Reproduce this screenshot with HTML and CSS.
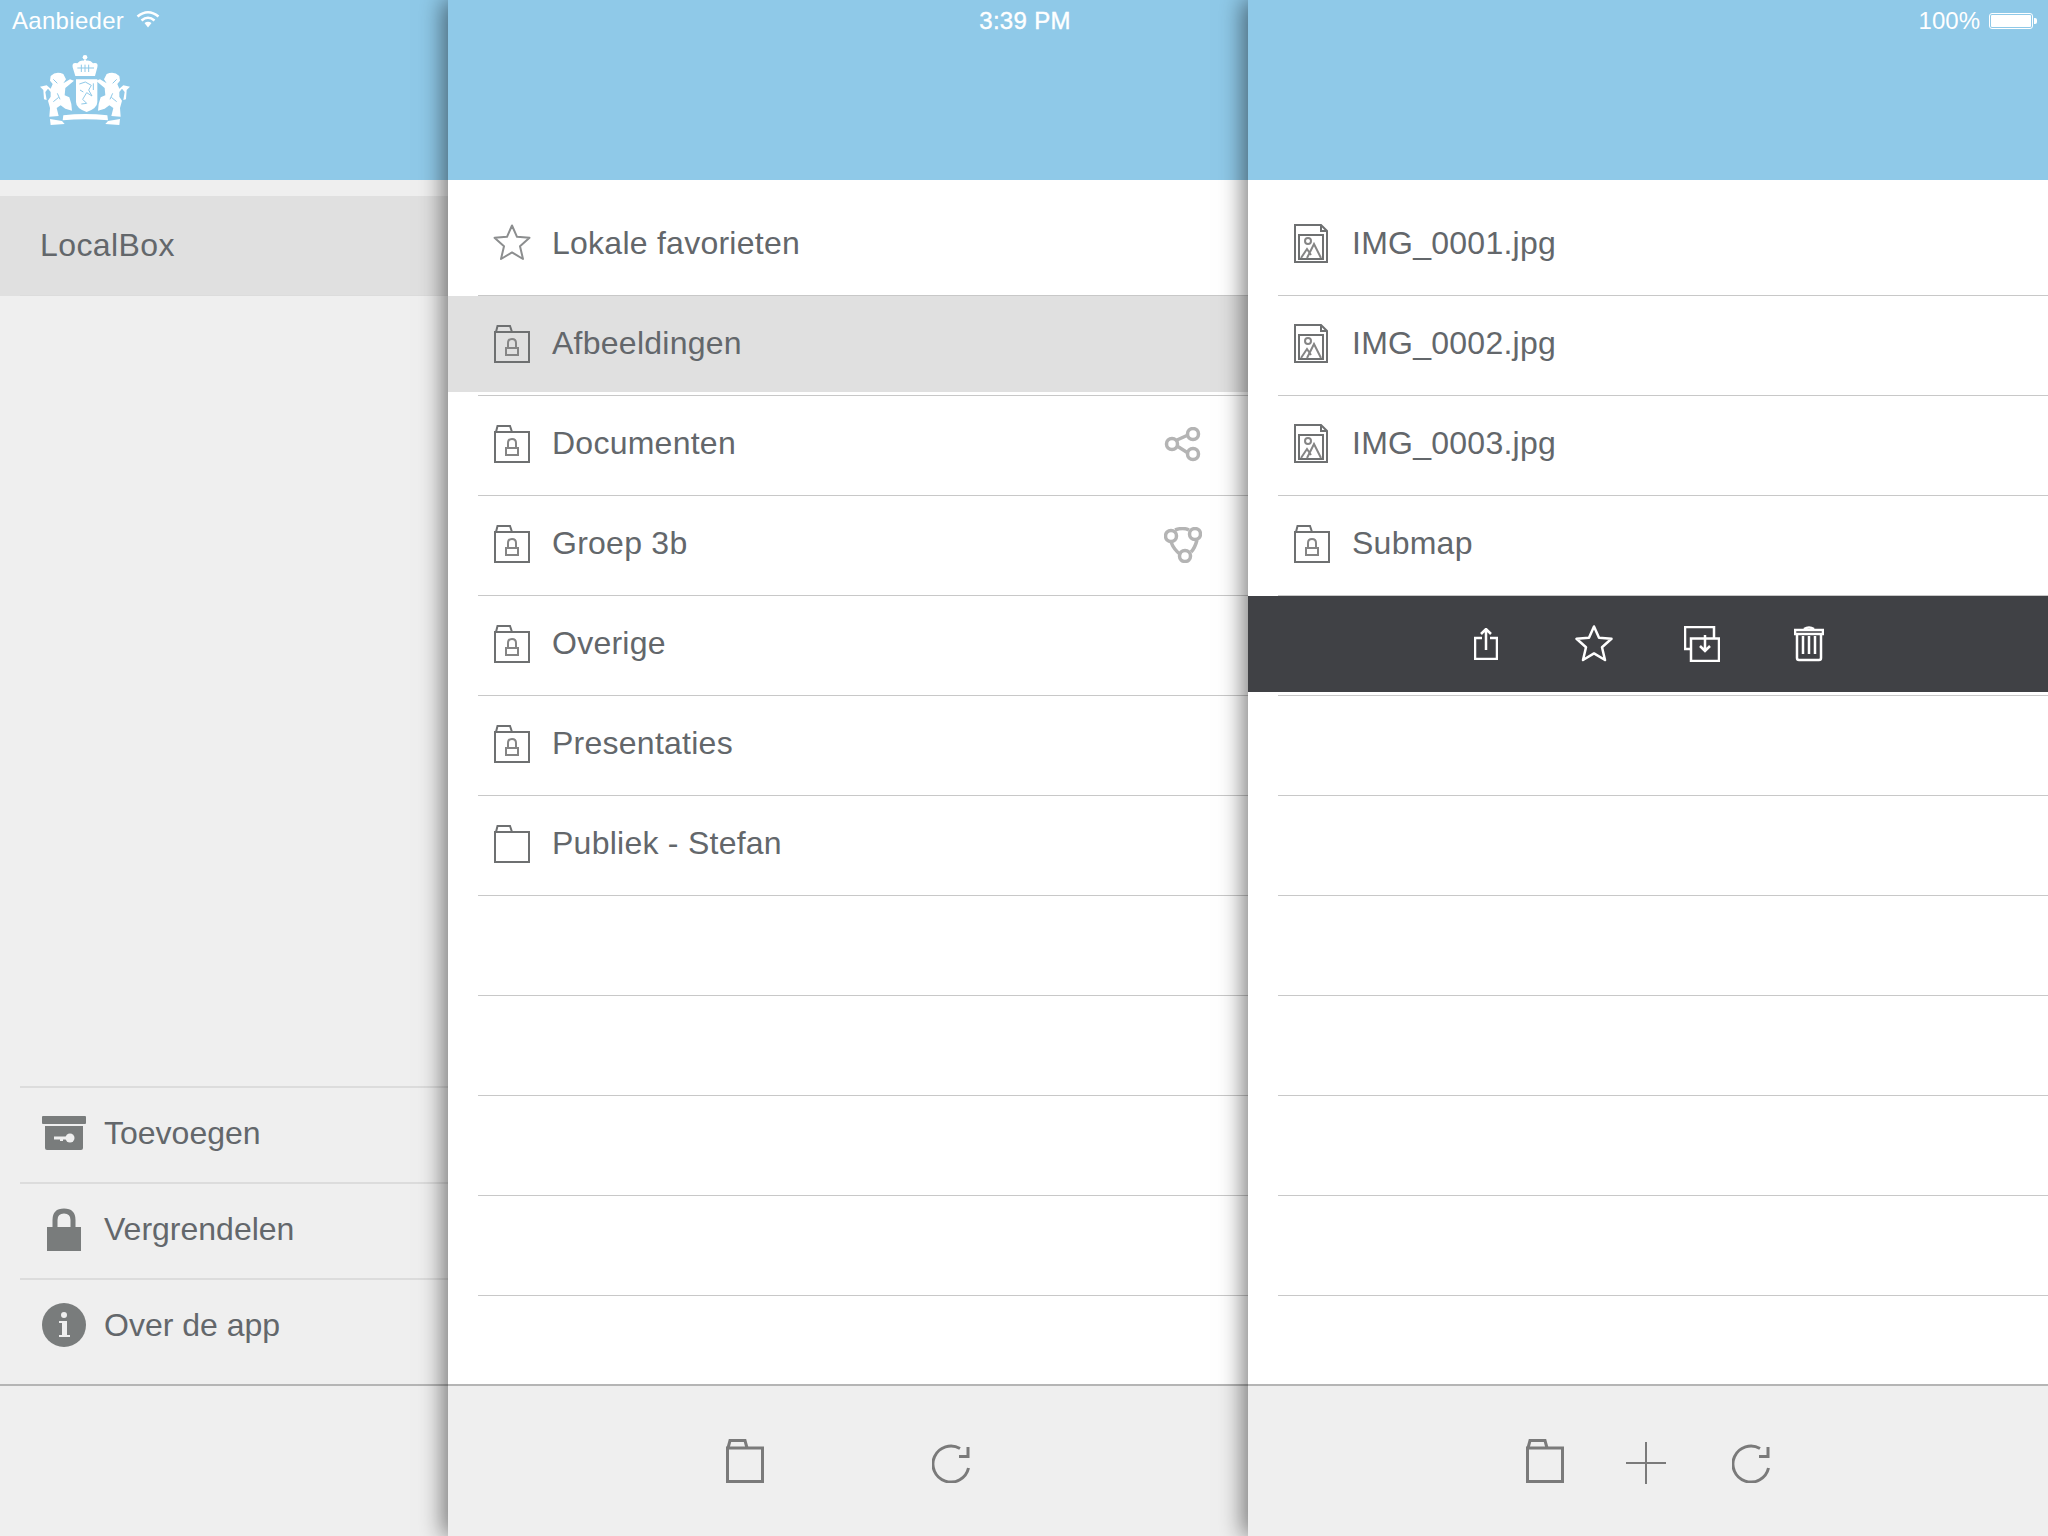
FILE: index.html
```html
<!DOCTYPE html>
<html lang="nl">

<head>
    <meta charset="UTF-8">
    <meta name="viewport" content="width=device-width, initial-scale=1.0">
    <title>LocalBox</title>
    <link rel="stylesheet" href="styles.css">
</head>

<body>
    <svg class="sprite" aria-hidden="true">
        <symbol id="folder-lock" viewBox="0 0 36 39">
            <path d="M2 8 L3.5 2 H16 L18 8" />
            <rect x="1" y="8" width="34" height="30" />
            <rect class="lock-line" x="12" y="24" width="12" height="7" />
            <path class="lock-line" d="M14 24 V19 Q14 15 18 15 Q22 15 22 19 V24" />
        </symbol>
        <symbol id="folder-plain" viewBox="0 0 36 39">
            <path d="M2 8 L3.5 2 H16 L18 8" />
            <rect x="1" y="8" width="34" height="30" />
        </symbol>
        <symbol id="image-file" viewBox="0 0 34 39" preserveAspectRatio="xMinYMid">
            <path d="M1 1 H27 L33 7 V38 H1 Z" />
            <path d="M27 1 V7 H33" />
            <rect x="5" y="11" width="24" height="24" />
            <circle class="image-line" cx="14" cy="17" r="3" />
            <path class="image-line" d="M7 34 L13 25 L17 31 M13 34 L20 20 L27 34" />
        </symbol>
        <symbol id="star" viewBox="0 0 38 37">
            <path d="M19 1.5 L24 12.8 L36.5 13.8 L27 22.2 L30 35 L19 28.4 L8 35 L11 22.2 L1.5 13.8 L14 12.8 Z" />
        </symbol>
        <symbol id="folder-big" viewBox="0 0 38 44">
            <path d="M2 9 L4 1.5 H19 L21 9" />
            <rect x="1.5" y="9" width="35" height="33.5" />
        </symbol>
        <symbol id="refresh" viewBox="0 -5 38 44">
            <path d="M28 4.5 A18 18 0 1 0 36.5 24" />
            <path d="M36 3 V12.5 H27" />
        </symbol>
    </svg>

    <div class="statusbar">
        <div class="status-left">
            <span class="carrier">Aanbieder</span>
            <svg class="wifi" viewBox="0 0 24 18">
                <path d="M1.5 6.5 Q12 -2 22.5 6.5" />
                <path d="M5.5 10.5 Q12 5 18.5 10.5" />
                <path class="wifi-dot" d="M8.5 13 Q12 10.5 15.5 13 L12 17.5 Z" />
            </svg>
        </div>
        <div class="status-time">3:39 PM</div>
        <div class="status-right">
            <span>100%</span>
            <svg class="battery" viewBox="0 0 49 16">
                <rect class="battery-case" x=".5" y=".5" width="43" height="15" rx="2.5" />
                <rect class="battery-fill" x="2" y="2" width="40" height="12" rx="1" />
                <path class="battery-fill" d="M45 5 H46 Q48 5 48 7 V9 Q48 11 46 11 H45 Z" />
            </svg>
        </div>
    </div>

    <div class="app">
        <!-- accounts -->
        <aside class="panel panel-side">
            <header class="panel-header">
                <svg class="logo" viewBox="0 0 390 300">
                    <g class="logo-fill">
                        <circle cx="195" cy="52" r="7" />
                        <path d="M166 108 L158 82 Q155 66 172 70 Q180 60 190 62 L195 58 L200 62 Q212 60 219 70 Q236 66 232 82 L225 108 Z" />
                        <path d="M168 118 H232 V186 Q232 205 200 216 Q168 205 168 186 Z" />
                        <path d="M130 226 Q195 218 262 226 L264 241 Q195 234 128 241 Z" />
                        <path d="M90 237 L126 243 L134 252 L92 255 Z" />
                        <path d="M300 237 L264 243 L256 252 L298 255 Z" />
                        <g id="lion">
                            <path d="M92 108 Q108 92 130 102 L138 118 L130 130 L150 118 L162 122 L136 144 L134 166 L148 172 L154 192 L156 212 L136 206 L122 196 L110 204 L116 228 L88 230 L90 204 L84 182 L92 170 L92 156 L84 146 L76 156 L80 180 L72 178 L70 150 L60 140 L80 136 L92 146 L98 132 L90 122 Z" />
                        </g>
                        <use href="#lion" transform="translate(390 0) scale(-1 1)" />
                    </g>
                    <g class="logo-cut">
                        <path d="M172 84 H222 M184 74 V96 M195 74 V96 M206 74 V96" />
                        <path d="M178 132 L196 126 L214 136 L206 150 L216 168 L200 158 L188 178 L200 190 L184 192 M220 130 V150 M180 150 L190 156" />
                        <path d="M112 160 L120 178 M100 185 L116 172 M100 118 L112 130" />
                        <path d="M278 160 L270 178 M290 185 L274 172 M290 118 L278 130" />
                    </g>
                </svg>
            </header>
            <div class="side-body">
                <div class="side-selected">LocalBox</div>
                <nav class="side-menu">
                    <a class="side-link" href="#">
                        <span class="side-icon">
                            <svg class="menu-icon" viewBox="0 0 44 34">
                                <rect class="icon-solid" y="0" width="44" height="8" rx="1" />
                                <path class="icon-solid" d="M3 10 H41 V32 Q41 34 39 34 H5 Q3 34 3 32 Z" />
                                <path class="icon-key" d="M12 20.5 H24 V23.5 H21 V25 H18 V23.5 H12 Z" />
                                <circle class="icon-key" cx="28" cy="22" r="4.5" />
                            </svg>
                        </span>
                        <span>Toevoegen</span>
                    </a>
                    <a class="side-link" href="#">
                        <span class="side-icon">
                            <svg class="menu-icon" viewBox="0 0 34 44">
                                <path class="icon-shackle" d="M8 20 V13 Q8 4 17 4 Q26 4 26 13 V20" />
                                <rect class="icon-solid" y="20" width="34" height="24" />
                            </svg>
                        </span>
                        <span>Vergrendelen</span>
                    </a>
                    <a class="side-link" href="#">
                        <span class="side-icon">
                            <svg class="menu-icon" viewBox="0 0 44 44">
                                <circle class="icon-solid" cx="22" cy="22" r="22" />
                                <circle class="icon-key" cx="22" cy="12" r="3" />
                                <path class="icon-key" d="M17 18 H25 V32 H28 V34 H17 V32 H20 V20 H17 Z" />
                            </svg>
                        </span>
                        <span>Over de app</span>
                    </a>
                </nav>
            </div>
            <footer class="toolbar"></footer>
        </aside>

        <!-- folders -->
        <section class="panel">
            <header class="panel-header"></header>
            <ul class="list">
                <li class="item">
                    <div class="item-inner">
                        <svg class="row-icon star-icon"><use href="#star" /></svg>
                        <span class="item-name">Lokale favorieten</span>
                    </div>
                </li>
                <li class="item selected">
                    <div class="item-inner">
                        <svg class="row-icon"><use href="#folder-lock" /></svg>
                        <span class="item-name">Afbeeldingen</span>
                    </div>
                </li>
                <li class="item">
                    <div class="item-inner">
                        <svg class="row-icon"><use href="#folder-lock" /></svg>
                        <span class="item-name">Documenten</span>
                        <svg class="badge" viewBox="0 0 38 36">
                            <path d="M13 13 L24 8 M13 19 L24 26" />
                            <circle cx="8" cy="17" r="5.5" />
                            <circle cx="29" cy="7" r="5.5" />
                            <circle cx="29" cy="27" r="5.5" />
                        </svg>
                    </div>
                </li>
                <li class="item">
                    <div class="item-inner">
                        <svg class="row-icon"><use href="#folder-lock" /></svg>
                        <span class="item-name">Groep 3b</span>
                        <svg class="badge" viewBox="0 0 38 36">
                            <path d="M11 3 Q19 0 25 3 M33 13 Q31 21 27 25 M17 28 Q10 23 7 15" />
                            <circle cx="7" cy="9" r="5.5" />
                            <circle cx="31" cy="7" r="5.5" />
                            <circle cx="21" cy="29" r="5.5" />
                        </svg>
                    </div>
                </li>
                <li class="item">
                    <div class="item-inner">
                        <svg class="row-icon"><use href="#folder-lock" /></svg>
                        <span class="item-name">Overige</span>
                    </div>
                </li>
                <li class="item">
                    <div class="item-inner">
                        <svg class="row-icon"><use href="#folder-lock" /></svg>
                        <span class="item-name">Presentaties</span>
                    </div>
                </li>
                <li class="item">
                    <div class="item-inner">
                        <svg class="row-icon"><use href="#folder-plain" /></svg>
                        <span class="item-name">Publiek - Stefan</span>
                    </div>
                </li>
                <li class="item"><div class="item-inner"></div></li>
                <li class="item"><div class="item-inner"></div></li>
                <li class="item"><div class="item-inner"></div></li>
                <li class="item"><div class="item-inner"></div></li>
            </ul>
            <footer class="toolbar toolbar-folders">
                <svg class="tool-icon"><use href="#folder-big" /></svg>
                <svg class="tool-icon"><use href="#refresh" /></svg>
            </footer>
        </section>

        <!-- files -->
        <section class="panel">
            <header class="panel-header"></header>
            <ul class="list">
                <li class="item">
                    <div class="item-inner">
                        <svg class="row-icon"><use href="#image-file" /></svg>
                        <span class="item-name">IMG_0001.jpg</span>
                    </div>
                </li>
                <li class="item">
                    <div class="item-inner">
                        <svg class="row-icon"><use href="#image-file" /></svg>
                        <span class="item-name">IMG_0002.jpg</span>
                    </div>
                </li>
                <li class="item">
                    <div class="item-inner">
                        <svg class="row-icon"><use href="#image-file" /></svg>
                        <span class="item-name">IMG_0003.jpg</span>
                    </div>
                </li>
                <li class="item">
                    <div class="item-inner">
                        <svg class="row-icon"><use href="#folder-lock" /></svg>
                        <span class="item-name">Submap</span>
                    </div>
                </li>
                <li class="item actions">
                    <div class="item-inner actions-inner">
                        <svg class="action-icon action-share" viewBox="0 0 24 32">
                            <path d="M8 10 H1 V31 H23 V10 H16" />
                            <path d="M12 22 V1 M7 6 L12 1 L17 6" />
                        </svg>
                        <svg class="action-icon action-star"><use href="#star" /></svg>
                        <svg class="action-icon action-copy" viewBox="0 0 36 36">
                            <path d="M7 23 H1 V1 H30 V12" />
                            <rect x="7" y="12.5" width="28" height="22.5" />
                            <path d="M21 9 V24 M16 20 L21 25 L26 20" />
                        </svg>
                        <svg class="action-icon action-trash" viewBox="0 0 30 36">
                            <path d="M1 8 V4 H29 V8 Z" />
                            <path d="M3 8 V32 Q3 34 5 34 H25 Q27 34 27 32 V8" />
                            <path d="M9 10 V28 M15 10 V28 M21 10 V28" />
                            <path d="M10 3 Q15 0 20 3" />
                        </svg>
                    </div>
                </li>
                <li class="item"><div class="item-inner"></div></li>
                <li class="item"><div class="item-inner"></div></li>
                <li class="item"><div class="item-inner"></div></li>
                <li class="item"><div class="item-inner"></div></li>
                <li class="item"><div class="item-inner"></div></li>
                <li class="item"><div class="item-inner"></div></li>
            </ul>
            <footer class="toolbar toolbar-files">
                <svg class="tool-icon"><use href="#folder-big" /></svg>
                <svg class="tool-plus" viewBox="0 0 40 42">
                    <path d="M20 0 V42 M0 21 H40" />
                </svg>
                <svg class="tool-icon"><use href="#refresh" /></svg>
            </footer>
        </section>
    </div>
</body>

</html>
```

FILE: styles.css
```css
html {
    box-sizing: border-box;
    font-family: "Liberation Sans", Arial, sans-serif;
    font-size: 32px;
}

*,
*::before,
*::after {
    box-sizing: inherit;
}

body {
    margin: 0;
    background-color: #fff;
    color: #63676b;
    letter-spacing: .25px;
    overflow: hidden;
}

ul {
    margin: 0;
    padding: 0;
    list-style: none;
}

a {
    color: inherit;
    text-decoration: none;
}

.sprite {
    position: absolute;
    width: 0;
    height: 0;
}

.statusbar {
    position: absolute;
    top: 0;
    left: 0;
    z-index: 10;
    width: 2048px;
    height: 42px;
    padding: 0 10px 0 12px;
    display: grid;
    grid-template-columns: 1fr auto 1fr;
    align-items: center;
    color: #fff;
    font-size: 24px;
    letter-spacing: 0;
}

.status-left {
    display: flex;
    align-items: center;
    gap: 12px;
}

.carrier {
    letter-spacing: .3px;
}

.status-time {
    letter-spacing: .3px;
    -webkit-text-stroke: .4px #fff;
}

.status-right {
    display: flex;
    justify-content: flex-end;
    align-items: center;
    gap: 9px;
}

.wifi {
    width: 24px;
    height: 18px;
    fill: none;
    stroke: #fff;
    stroke-width: 2.6;
    margin-bottom: 4px;
}

.wifi-dot {
    fill: #fff;
    stroke: none;
}

.battery {
    width: 49px;
    height: 16px;
}

.battery-case {
    fill: none;
    stroke: #fff;
}

.battery-fill {
    fill: #fff;
}

.app {
    display: flex;
    height: 1536px;
}

.panel {
    position: relative;
    width: 800px;
    display: flex;
    flex-direction: column;
    background-color: #fff;
    box-shadow: -5px 0 22px rgba(0, 0, 0, .5);
}

.panel-side {
    width: 448px;
    background-color: #efefef;
    box-shadow: none;
}

.panel-header {
    height: 180px;
    flex-shrink: 0;
    background-color: #8fc9e8;
}

.logo {
    display: block;
    width: 130px;
    height: 100px;
    margin: 40px 0 0 20px;
}

.logo-fill {
    fill: #fff;
}

.logo-cut {
    fill: none;
    stroke: #8fc9e8;
    stroke-width: 3;
}

.side-body {
    flex-grow: 1;
    padding-top: 16px;
    display: flex;
    flex-direction: column;
    justify-content: space-between;
}

.side-selected {
    height: 100px;
    padding: 0 0 2px 40px;
    display: flex;
    align-items: center;
    background: linear-gradient(#dcdcdc, #dcdcdc) 20px 100% / 100% 1px no-repeat, #e0e0e0;
    letter-spacing: .4px;
}

.side-menu {
    margin-left: 20px;
    padding-bottom: 10px;
    letter-spacing: 0;
}

.side-link {
    height: 96px;
    display: flex;
    align-items: center;
    border-top: 2px solid #dcdcdc;
    padding-bottom: 4px;
}

.side-icon {
    width: 84px;
    padding-left: 22px;
    flex-shrink: 0;
}

.menu-icon {
    display: block;
    width: 44px;
    height: 44px;
}

.icon-solid {
    fill: #797c7c;
}

.icon-key {
    fill: #efefef;
}

.icon-shackle {
    fill: none;
    stroke: #797c7c;
    stroke-width: 5;
}

.list {
    flex-grow: 1;
    padding-top: 16px;
}

.item {
    padding-left: 30px;
}

.item-inner {
    height: 100px;
    padding: 0 46px 6px 16px;
    display: flex;
    align-items: center;
    border-bottom: 1px solid #c8c8c8;
}

.item.selected {
    background: linear-gradient(#e0e0e0, #e0e0e0) top left / 100% 96px no-repeat;
}

.item-name {
    margin-left: 22px;
    line-height: 40px;
}

.row-icon {
    width: 36px;
    height: 39px;
    margin-top: 2px;
    flex-shrink: 0;
    fill: none;
    stroke: #6e7071;
    stroke-width: 2;
}

.lock-line,
.image-line {
    stroke: #858585;
}

.star-icon {
    width: 38px;
    height: 37px;
    margin: 0 -1px;
    stroke: #8c8e8f;
    stroke-linejoin: round;
}

.badge {
    width: 38px;
    height: 36px;
    margin: 4px 0 0 auto;
    fill: none;
    stroke: #b4b4b4;
    stroke-width: 3.5;
}

.item.actions {
    background: linear-gradient(#404145, #404145) top left / 100% 96px no-repeat;
}

.actions-inner {
    padding: 0 28px 4px 0;
    justify-content: center;
    gap: 71px;
}

.action-icon {
    flex-shrink: 0;
    fill: none;
    stroke: #fff;
    stroke-width: 2.5;
}

.action-share {
    width: 24px;
    height: 32px;
}

.action-star {
    width: 38px;
    height: 37px;
    margin-left: 6px;
    stroke-linejoin: round;
}

.action-copy {
    width: 36px;
    height: 36px;
}

.action-trash {
    width: 30px;
    height: 36px;
    margin-left: 3px;
}

.toolbar {
    height: 152px;
    flex-shrink: 0;
    display: flex;
    justify-content: center;
    align-items: center;
    background-color: #efefef;
    border-top: 2px solid #b5b5b5;
}

.toolbar-folders {
    gap: 168px;
}

.toolbar-files {
    gap: 63px;
}

.tool-icon {
    width: 38px;
    height: 44px;
    fill: none;
    stroke: #7a7a7a;
    stroke-width: 3;
}

.tool-plus {
    width: 40px;
    height: 42px;
    margin: 4px 3px 0 -1px;
    fill: none;
    stroke: #7a7a7a;
    stroke-width: 2;
}
```
